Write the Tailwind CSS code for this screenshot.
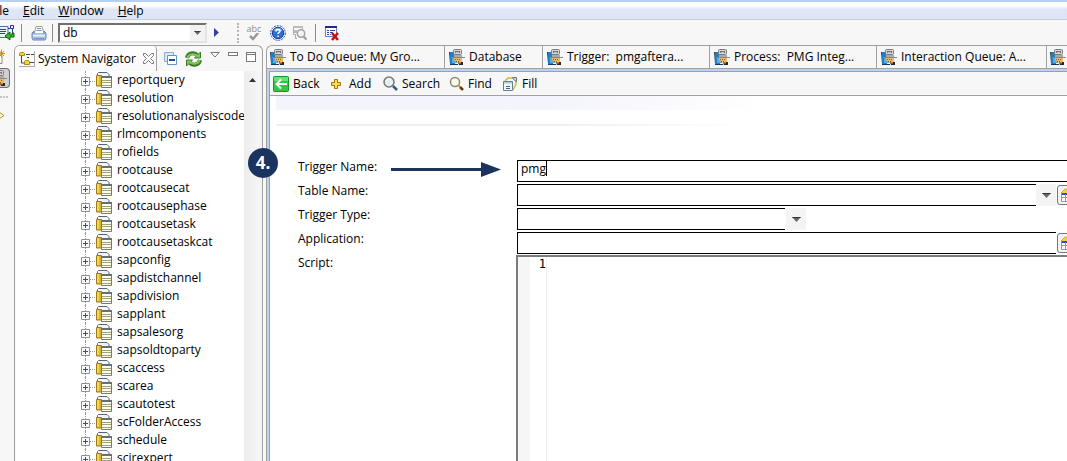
<!DOCTYPE html>
<html lang="en">
<head>
<meta charset="utf-8">
<title>System Navigator</title>
<script src="https://cdn.jsdelivr.net/npm/@tailwindcss/browser@4"></script>
</head>
<body class="h-screen overflow-hidden bg-[#f7f7f7] text-black text-[12px] leading-[18px] font-['Open_Sans','Noto_Sans',sans-serif]">

<svg class="hidden" aria-hidden="true">
  <symbol id="tab" viewBox="0 0 16 18">
    <path d="M1 4h5v12H1z" fill="#1f7fc4"/><path d="M0 4h1v13h8v-1H1z" fill="#123a5e"/>
    <path d="M3 10h5v5H3z" fill="#55aee0"/>
    <rect x="4.500" y="1.500" width="8" height="5" rx="1" fill="#d2d2d2" stroke="#7d7d7d"/><path d="M6 3h5v2H6z" fill="#777"/><path d="M7 4h3v1H7z" fill="#c4c4c4"/>
    <path d="M5 7h8v2H5z" fill="#aaa"/><path d="M2 9h14v1H2z" fill="#858585"/>
    <path d="M5 10h8v4l-2 1H9l-4-3z" fill="#eab765"/><path d="M6 11.500h6M7 13.500h4" stroke="#8f6429" stroke-dasharray="1 1"/>
    <path d="M9 14h5v3h-4z" fill="#2a2420"/><path d="M9 14h3v1l-1 1z" fill="#e88326"/>
  </symbol>
  <symbol id="folder" viewBox="0 0 16 16">
    <path d="M1.500 3V1.500l1-1H11l2 2V5" fill="#f1f4fb" stroke="#59647a"/>
    <path d="M.5 3.500h5V14h-5z" fill="#dbb52c" stroke="#a07a14"/><path d="M1 4h2v9H1z" fill="#f0d468"/>
    <path d="M5.500 4.500h10v11h-10z" fill="#fffff0" stroke="#7a7b5e"/>
    <path d="M5 4h11v2H5z" fill="#667073"/><path d="M6 8.500h9M6 10.500h9M6 13.500h9" stroke="#a0a17c"/>
  </symbol>
  <symbol id="plus" viewBox="0 0 9 9">
    <path d="M.5.5h8v8h-8z" fill="#fafafa" stroke="#919191"/><path d="M2 4.500h5M4.500 2v5" stroke="#2f4f9c"/>
  </symbol>
  <symbol id="down" viewBox="0 0 9 5"><path d="M0 0h9L4.500 5z" fill="#666"/><path d="M0 0h9L8 1H1z" fill="#333"/></symbol>
  <symbol id="record" viewBox="0 0 18 20">
    <rect x=".5" y=".5" width="20" height="19" rx="2.500" fill="#f3f3f3" stroke="#777"/>
    <path d="M4 8l4-4h10v6H4z" fill="#f2cf3e"/><path d="M4 8l4-4h10" fill="none" stroke="#cfae30"/>
    <path d="M4 8h14v9H4z" fill="#fff"/><path d="M4 8h14v2H4z" fill="#2d4fc0"/><path d="M4.500 8v8.500H18M4 12.500h14M8.500 10v6" fill="none" stroke="#8d97ad"/>
  </symbol>
</svg>

<div class="relative flex h-full flex-col overflow-hidden">
  <nav class="flex h-5 shrink-0 items-center gap-[14px] overflow-hidden border-t-2 border-b border-t-[#b5d0ef] border-b-[#c9cddb] bg-linear-to-b from-white from-20% via-[#e0e6f5] via-45% to-[#dde5f6]" aria-label="Main menu">
    <button class="-ml-[10px]"><u>F</u>ile</button>
    <button><u>E</u>dit</button>
    <button><u>W</u>indow</button>
    <button><u>H</u>elp</button>
  </nav>

  <div class="flex h-[25px] shrink-0 items-center overflow-hidden" role="toolbar" aria-label="Main toolbar">
    <button class="w-[15px] shrink-0" aria-label="Open">
      <svg class="h-[17px] w-[15px]" viewBox="0 0 15 17"><path d="M-1 2.500h9v11h-9z" fill="#e9f1fc" stroke="#4a6ea8"/><path d="M0 5.500h6M0 7.500h6M0 9.500h5" stroke="#2944a0"/><path d="M10.500 1.500h3v3h-3z" fill="#fff" stroke="#1735b5"/><path d="M12.500 5v4M8 4.500h2" stroke="#1735b5"/><path d="M14 9v4h-4v3l-5-4 5-4v3h2V9z" fill="#3ab53a" stroke="#0c650f"/></svg>
    </button>
    <span class="ml-[6px] h-[18px] w-px shrink-0 bg-[#8c8c8c]"></span>
    <button class="ml-[9px] shrink-0" aria-label="Print">
      <svg class="h-4 w-4" viewBox="0 0 16 16"><path d="M3.500 8L5 1.500h6l2 6.500" fill="#fff" stroke="#a59c7f"/><path d="M6 3.500h4M5.500 5.500h5" stroke="#6d93cb"/><path d="M1 8l2-2v3h10V6l2 2v5l-1 2H2l-1-2z" fill="#a9c1e4" stroke="#6a86b4"/><path d="M2 10.500h12" stroke="#e9f1fb" stroke-width="2"/><path d="M3 13.500h10" stroke="#7895c4"/></svg>
    </button>
    <span class="ml-[5px] h-[18px] w-px shrink-0 bg-[#8c8c8c]"></span>
    <div class="relative ml-[5px] h-5 w-[149px] shrink-0">
      <select aria-label="Command" class="h-5 w-full appearance-none border-2 border-t-[#6f6f6f] border-r-[#e3e3e3] border-b-[#e3e3e3] border-l-[#6f6f6f] bg-white pl-[3px] leading-4"><option>db</option></select>
      <span class="pointer-events-none absolute top-[2px] right-[2px] flex h-4 w-[15px] items-center justify-center bg-[#f2f2f2]"><svg class="h-1 w-[7px]"><use href="#down"/></svg></span>
    </div>
    <button class="ml-[7px] shrink-0" aria-label="Run"><svg class="h-[9px] w-[5px]" viewBox="0 0 5 9"><path d="M0 0l5 4.500L0 9z" fill="#3c3c9c"/></svg></button>
    <span class="ml-[18px] h-5 shrink-0 border-l-2 border-dotted border-[#b5b5b5]"></span>
    <button class="relative ml-[7px] flex h-[18px] w-4 shrink-0 flex-col items-center text-[9px] leading-[9px] text-[#8e8e8e]">abc
      <svg class="h-2 w-[10px]" viewBox="0 0 10 8" aria-hidden="true"><path d="M1 3l3 3 5-6" fill="none" stroke="#999" stroke-width="2.500"/></svg>
    </button>
    <button class="ml-2 shrink-0" aria-label="Help">
      <svg class="h-4 w-4" viewBox="0 0 16 16"><circle cx="8" cy="8" r="7.300" fill="#fff" stroke="#1a3fb0" stroke-dasharray="2 1"/><circle cx="8" cy="8" r="5.700" fill="#2c6fd8" stroke="#1039a0"/><path d="M4 6a4 3 0 0 1 8 0z" fill="#7db1f1"/><path d="M6 6.500c0-3 4-2.500 4-.5 0 1.500-2 1.300-2 3M8 10.500v1.500" fill="none" stroke="#fff" stroke-width="1.500"/></svg>
    </button>
    <button class="ml-[6px] shrink-0" aria-label="Preview">
      <svg class="h-4 w-4" viewBox="0 0 16 16"><path d="M5 13.500H3.500v-4h-2v-8h9V4" fill="none" stroke="#aaa"/><path d="M1 1h10v2H1zM2 5h3v3H2z" fill="#bbb"/><circle cx="9" cy="8.500" r="3.700" fill="#f4f4f4" stroke="#a5a5a5" stroke-width="1.500"/><path d="M11.500 11.500l3 3" stroke="#999" stroke-width="2"/></svg>
    </button>
    <span class="ml-[7px] h-[18px] w-px shrink-0 bg-[#8c8c8c]"></span>
    <button class="ml-[9px] shrink-0" aria-label="Delete record">
      <svg class="h-4 w-[15px]" viewBox="0 0 15 16"><path d="M.5 1.500h11v10H.5z" fill="#fff" stroke="#717fb4"/><path d="M0 1h12v2H0z" fill="#1d2e93"/><path d="M2 5.500h2M5 5.500h5M2 7.500h2M5 7.500h3M2 9.500h2M5 9.500h1" stroke="#35439c"/><path d="M7 8l6 7M13 8l-6 7" stroke="#d00d0d" stroke-width="2.500"/></svg>
    </button>
  </div>

  <main class="flex min-h-0 flex-1">
    <aside class="flex w-[14px] shrink-0 flex-col overflow-hidden" aria-label="Perspectives">
      <button class="mt-1" aria-label="Open perspective"><svg class="block h-4 w-[14px]" viewBox="0 0 14 16"><path d="M-1 6.500h3v8h-3" fill="#fff" stroke="#9a8b60"/><path d="M1.500.5v8M-2 4.500h7M-.5 2l4.500 5M4 2l-4.500 5" stroke="#c8961a"/></svg></button>
      <button class="mt-[3px] h-5 w-[10px] overflow-hidden rounded-r border border-l-0 border-[#6d6d6d] bg-[#cfcfcf]" aria-label="System perspective"><svg class="-ml-[9px] block h-[18px] w-4"><use href="#tab"/></svg></button>
      <span class="mt-2 h-0 w-2 border-t-2 border-dotted border-[#c4c4c4]"></span>
      <button class="mt-[13px]" aria-label="Fast view"><svg class="block h-[9px] w-[5px]" viewBox="0 0 5 9"><path d="M-1 1l5 3.500L-1 8z" fill="#fff8d8" stroke="#c38f12"/></svg></button>
    </aside>

    <section class="flex w-[249px] shrink-0 flex-col overflow-hidden rounded-t-md border border-b-0 border-[#a0a0a0] bg-[#f7f7f7]" aria-label="System Navigator">
      <header class="flex h-[25px] shrink-0 items-stretch">
        <div class="flex w-[142px] shrink-0 items-center rounded-tr-sm border-r border-[#a0a0a0] bg-linear-to-b from-white to-[#f8f8f8] pl-1">
          <svg class="h-4 w-4 shrink-0" viewBox="0 0 16 16"><path d="M0 .500h15v15H0z" fill="#fbfbf7"/><path d="M0 15.500h16M15.500 0v15" stroke="#aaa"/><path d="M2.500 5v7h4M7 3.500h4M12 3.500h3M11 11.500h4" fill="none" stroke="#45454d"/><path d="M.5 2.500l1-1h3l1 1v2h-5zM5.500 10.500l1-1h3l1 1v3h-5z" fill="#f3d52f" stroke="#a98b10"/><path d="M8 6.500h2" stroke="#3c3c3c"/></svg>
          <h1 class="ml-[3px] whitespace-nowrap">System Navigator</h1>
          <button class="ml-[7px] shrink-0" aria-label="Close view"><svg class="block h-[11px] w-[11px]" viewBox="0 0 11 11"><path d="M.5.5h2l3 3 3-3h2v2l-3 3 3 3v2h-2l-3-3-3 3h-2v-2l3-3-3-3z" fill="#fff" stroke="#777"/></svg></button>
        </div>
        <div class="flex flex-1 items-center pl-[7px]">
          <button aria-label="Collapse all"><svg class="block h-[13px] w-[13px]" viewBox="0 0 13 13"><path d="M.5.5h9v9h-9z" fill="#d9ebfa" stroke="#86aede"/><path d="M3.500 3.500h9v9h-9z" fill="#fff" stroke="#6293cc"/><path d="M5 8h6" stroke="#1a4fa0" stroke-width="2"/></svg></button>
          <button class="ml-2" aria-label="Refresh"><svg class="block h-4 w-[17px]" viewBox="0 0 17 16"><path d="M2 7C3 2 9 1 12 4M15 9c-1 5-7 6-10 3" fill="none" stroke="#3c7b2c" stroke-width="4"/><path d="M15.500 1v6h-6zM1.500 15V9h6z" fill="#82c55c" stroke="#3c7b2c"/><path d="M2.500 7C3 3 9 2 12.500 5M14.500 9c-1 4-6 5-10 2" fill="none" stroke="#82c55c" stroke-width="2"/></svg></button>
          <button class="mb-2 ml-2" aria-label="View menu"><svg class="block h-[6px] w-[10px]" viewBox="0 0 10 6"><path d="M.8.5h8.400L5 5z" fill="#fff" stroke="#777"/></svg></button>
          <button class="mb-[10px] ml-[8px] h-1 w-[10px] border border-[#777] bg-white" aria-label="Minimize"></button>
          <button class="mb-1 ml-2 flex h-[10px] w-[10px] border border-[#777] bg-white pt-px" aria-label="Maximize"><span class="h-px w-full bg-[#777]"></span></button>
        </div>
      </header>
      <div class="mx-px flex min-h-0 flex-1 bg-white">
        <ul id="tree" class="min-w-0 flex-1 overflow-hidden pl-[65px]"></ul>
        <div class="flex w-[17px] shrink-0 justify-center border-r border-[#f0f0f0] bg-linear-to-r from-[#ececec] to-[#f7f7f7] pt-[7px]">
          <svg class="h-1 w-[7px]" viewBox="0 0 7 4"><path d="M0 4h7L3.500 0z" fill="#333"/></svg>
        </div>
      </div>
    </section>

    <section class="ml-[3px] flex min-w-0 flex-1 flex-col overflow-hidden rounded-tl-md border-t border-l border-[#a0a0a0]" aria-label="Editor">
      <div id="tabs" class="flex h-[23px] shrink-0 overflow-hidden border-b border-[#a0a0a0]" role="tablist"></div>
      <div class="flex min-h-0 flex-1 flex-col border-t-2 border-l-2 border-[#b9d3f0]">
        <div class="flex min-h-0 flex-1 flex-col border-t border-l border-[#a0a0a0] bg-white">
          <div class="flex h-6 shrink-0 items-center border-b border-[#a0a0a0] bg-[#f7f7f7] pl-[3px]" role="toolbar" aria-label="Record actions">
            <button class="flex w-[57px] items-center gap-1"><svg class="h-4 w-4 shrink-0" viewBox="0 0 16 16"><rect x=".5" y=".5" width="15" height="15" rx="1" fill="#30c944" stroke="#159626"/><path d="M1 1h14v4H1z" fill="#6bdf74"/><path d="M8 3.500L3.500 8 8 12.500M4 8h10" fill="none" stroke="#fff" stroke-width="2"/></svg>Back</button>
            <button class="flex w-[53px] items-center gap-[7px]"><svg class="h-3 w-3 shrink-0" viewBox="0 0 12 12"><path d="M4.500 1.500h3v3h3v3h-3v3h-3v-3h-3v-3h3z" fill="#ffd93e" stroke="#a77310"/></svg>Add</button>
            <button class="flex w-[66px] items-center gap-1"><svg class="h-4 w-[15px] shrink-0" viewBox="0 0 15 16"><circle cx="6" cy="6" r="5" fill="#e8eff2" stroke="#777" stroke-width="1.500"/><path d="M3 5c1-2 3-2 4-2" stroke="#fff" fill="none"/><path d="M10 10l4 4" stroke="#2f5e8c" stroke-width="2.500"/></svg>Search</button>
            <button class="flex w-[54px] items-center gap-1"><svg class="h-4 w-[15px] shrink-0" viewBox="0 0 15 16"><circle cx="6" cy="6" r="4.500" fill="#fdfdec" stroke="#888870" stroke-width="1.500"/><path d="M9 9l2 2" stroke="#c79a33" stroke-width="2"/><path d="M11 11l3 3" stroke="#6c3a1a" stroke-width="2.500"/></svg>Find</button>
            <button class="flex items-center gap-[5px]"><svg class="h-4 w-[14px] shrink-0" viewBox="0 0 14 16"><path d="M.5 5.500h9v9h-9z" fill="#eef6fd" stroke="#5c8298"/><path d="M1 6h8v1.500H1z" fill="#a9c9dd"/><path d="M3 10.500h4M3 12.500h4" stroke="#4d5a8c"/><path d="M2 5l3-3h5M13 4v4l-3 6" fill="none" stroke="#e5b529" stroke-width="1.500"/><path d="M9.500 1.500h4v4l-2-1z" fill="#d3dae0" stroke="#6a7784"/></svg>Fill</button>
          </div>
          <div class="mx-[6px] h-[14px] shrink-0 bg-linear-to-r from-[#f4f4fc] from-35% to-white to-62%"></div>
          <div class="mx-[6px] mt-[14px] h-[2px] shrink-0 bg-linear-to-r from-[#efeef6] from-35% to-white to-60%"></div>

          <form class="mt-[34px] flex min-h-0 flex-1 flex-col pl-[28px]" onsubmit="return false">
            <div class="mb-[2px] flex h-[22px] shrink-0"><label for="name" class="h-[14px] w-[219px] shrink-0 leading-[14px]">Trigger Name:</label><input id="name" value="pmg" class="min-w-0 flex-1 border border-r-0 border-black bg-white px-[3px] pb-1 outline-none"></div>
            <div class="mb-[2px] flex h-[22px] shrink-0"><label for="table" class="h-[14px] w-[219px] shrink-0 leading-[14px]">Table Name:</label><input id="table" class="min-w-0 flex-1 border border-r-0 border-black bg-white px-1"><button type="button" aria-label="Choose table" class="flex w-5 shrink-0 items-center justify-center bg-[#f4f4f4]"><svg class="h-[5px] w-[9px]"><use href="#down"/></svg></button><button type="button" aria-label="Look up table" class="w-[11px] shrink-0 overflow-hidden pl-px"><svg class="h-5 w-[18px]"><use href="#record"/></svg></button></div>
            <div class="mb-[2px] flex h-[22px] shrink-0"><label for="type" class="h-[14px] w-[219px] shrink-0 leading-[14px]">Trigger Type:</label><div class="relative w-[289px]"><select id="type" class="h-[22px] w-[268px] appearance-none border border-r-0 border-black bg-white px-1"><option></option></select><span class="pointer-events-none absolute inset-y-0 right-0 flex w-5 items-center justify-center bg-[#f4f4f4]"><svg class="h-[5px] w-[9px]"><use href="#down"/></svg></span></div></div>
            <div class="mb-px flex h-[22px] shrink-0"><label for="app" class="h-[14px] w-[219px] shrink-0 leading-[14px]">Application:</label><input id="app" class="min-w-0 flex-1 border border-r-0 border-black bg-white px-1"><button type="button" aria-label="Look up application" class="w-[11px] shrink-0 overflow-hidden pl-px"><svg class="h-5 w-[18px]"><use href="#record"/></svg></button></div>
            <div class="flex min-h-0 flex-1"><label for="script" class="h-4 w-[218px] shrink-0 leading-4">Script:</label><div class="flex min-w-0 flex-1 border-t-2 border-l-2 border-[#7c7c7c] font-['DejaVu_Sans_Mono',monospace]"><span class="w-3 shrink-0 bg-[#f6f6f6]"></span><span class="w-[17px] shrink-0 border-r border-[#f0f0f0] text-right leading-[14px]">1</span><textarea id="script" class="min-w-0 flex-1 resize-none bg-white px-1 outline-none"></textarea></div></div>
          </form>
        </div>
      </div>
    </section>
  </main>

  <div class="absolute top-[148px] left-[248px] flex h-[30px] w-[30px] items-center justify-center rounded-full bg-[#1b335f] text-[17px] font-bold text-white">4.</div>
  <svg class="absolute top-[161px] left-[391px] h-4 w-[110px]" viewBox="0 0 110 16" aria-hidden="true"><path d="M0 7h90V1l20 7.500L90 16v-6H0z" fill="#1b335f"/></svg>
  <span class="absolute top-[161px] left-[546px] h-[15px] w-px bg-black"></span>
</div>

<script>
const tables = ['reportquery','resolution','resolutionanalysiscode','rlmcomponents','rofields','rootcause','rootcausecat','rootcausephase','rootcausetask','rootcausetaskcat','sapconfig','sapdistchannel','sapdivision','sapplant','sapsalesorg','sapsoldtoparty','scaccess','scarea','scautotest','scFolderAccess','schedule','scirexpert'];
document.getElementById('tree').innerHTML = tables.map(t => `<li class="flex h-[18px] items-center whitespace-nowrap">
  <button class="relative flex h-[18px] w-[9px] shrink-0 items-center" aria-label="Expand ${t}"><span class="absolute inset-y-0 left-1 border-l border-dotted border-[#999]"></span><svg class="relative mt-[2px] h-[9px] w-[9px]"><use href="#plus"/></svg></button>
  <span class="mt-[2px] w-[5px] shrink-0 border-t border-dotted border-[#999]"></span>
  <svg class="ml-px h-4 w-4 shrink-0"><use href="#folder"/></svg><span class="ml-[5px]">${t}</span></li>`).join('');
const tabs = [['To Do Queue: My Gro...','w-[178px] pl-[3px]'],['Database','w-[98px] pl-1'],['Trigger:\u00a0 pmgaftera...','w-[167px] pl-1'],['Process:\u00a0 PMG Integ...','w-[167px] pl-1'],['Interaction Queue: A...','w-[170px] pl-1'],['','w-[170px] pl-[3px]']];
document.getElementById('tabs').innerHTML = tabs.map(([t, c]) => `<button role="tab" class="flex shrink-0 items-center gap-1 border-r border-[#a0a0a0] whitespace-nowrap ${c}"><svg class="h-[18px] w-4 shrink-0"><use href="#tab"/></svg>${t}</button>`).join('');
</script>
</body>
</html>
